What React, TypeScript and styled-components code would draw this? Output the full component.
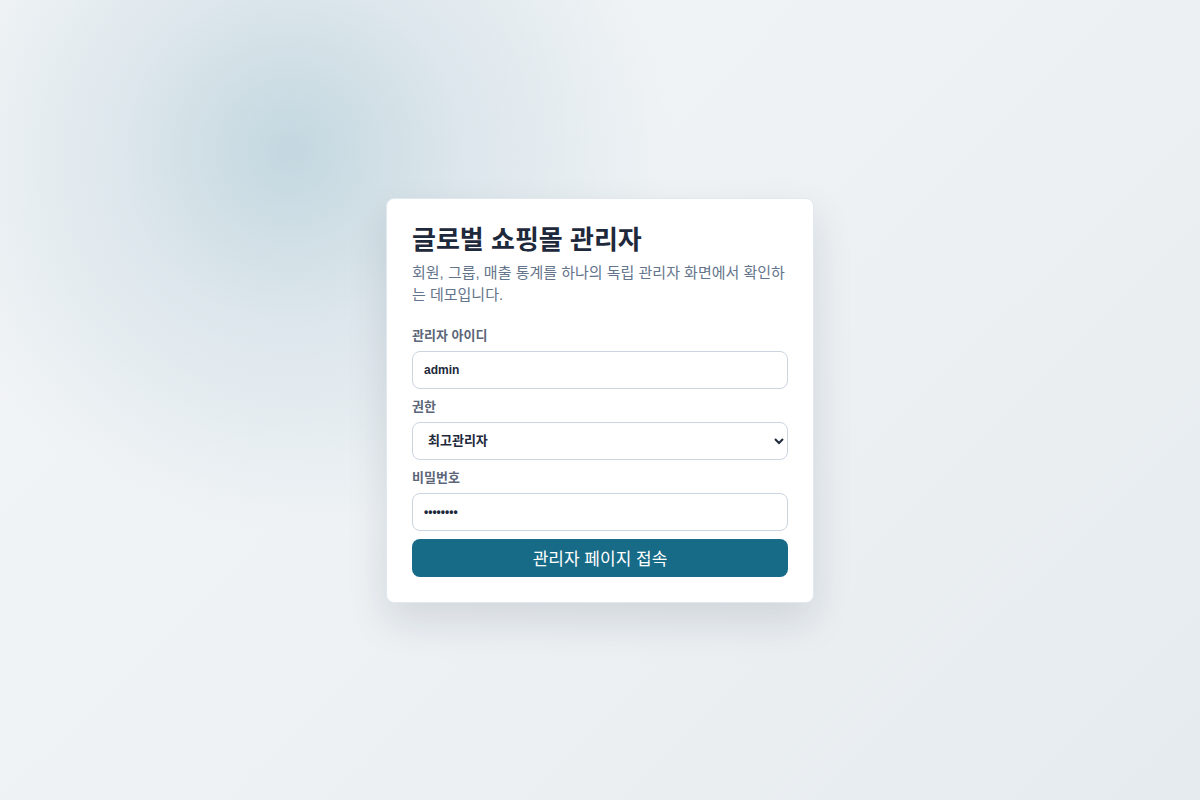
import React, { useState } from "react";
import styled, { createGlobalStyle } from "styled-components";

const COLORS = {
  INK: "#1e293b",
  MUTED: "#64748b",
  LABEL: "#5b6678",
  LINE: "#cbd5e1",
  BRAND: "#176b87",
  WHITE: "#ffffff",
};

const FONT = `"Liberation Sans", "Noto Sans CJK KR", sans-serif`;

const GlobalStyle = createGlobalStyle`
  html, body, #root {
    margin: 0;
    padding: 0;
    height: 100%;
  }
  body {
    font-family: ${FONT};
    color: ${COLORS.INK};
  }
  * {
    box-sizing: border-box;
  }
`;

const Page = styled.main`
  display: flex;
  align-items: center;
  justify-content: center;
  min-height: 100vh;
  background:
    radial-gradient(circle at 290px 150px, rgba(184, 208, 218, 0.8) 0, rgba(200, 217, 225, 0.5) 170px, rgba(220, 230, 235, 0) 380px),
    linear-gradient(135deg, #f4f6f8 0%, #eef2f5 45%, #e6ebef 100%);
`;

const Card = styled.section`
  width: 428px;
  padding: 25px;
  background: ${COLORS.WHITE};
  border: 1px solid #e2e8f0;
  border-radius: 8px;
  box-shadow: 0 18px 40px rgba(15, 23, 42, 0.12);
`;

const Title = styled.h1`
  margin: 0;
  font-size: 26px;
  line-height: 33px;
  font-weight: 700;
  color: ${COLORS.INK};
`;

const Subtitle = styled.p`
  margin: 5px 0 0;
  font-size: 15px;
  line-height: 22px;
  color: ${COLORS.MUTED};
  word-break: break-all;
`;

const Form = styled.form`
  display: flex;
  flex-direction: column;
  gap: 10px;
  margin-top: 22px;
`;

const Field = styled.label`
  display: flex;
  flex-direction: column;
  gap: 7px;
`;

const FieldLabel = styled.span`
  font-size: 13px;
  line-height: 16px;
  font-weight: 600;
  color: ${COLORS.LABEL};
`;

const controlStyle = `
  width: 100%;
  height: 38px;
  padding: 0 11px;
  border: 1px solid ${COLORS.LINE};
  border-radius: 8px;
  background: ${COLORS.WHITE};
  font-family: ${FONT};
  font-size: 12px;
  font-weight: 700;
  color: ${COLORS.INK};
  outline: none;
`;

const Input = styled.input`
  ${controlStyle}
`;

const Select = styled.select`
  ${controlStyle}
  padding: 0 6px 0 11px;
  font-size: 13px;
`;

const Submit = styled.button`
  height: 38px;
  margin-top: -2px;
  padding-bottom: 2px;
  border: none;
  border-radius: 8px;
  background: ${COLORS.BRAND};
  color: ${COLORS.WHITE};
  font-family: ${FONT};
  font-size: 17px;
  font-weight: 400;
  cursor: pointer;
`;

const App: React.FC = () => {
  const [id, setId] = useState("admin");
  const [role, setRole] = useState("super");
  const [password, setPassword] = useState("password");

  return (
    <>
      <GlobalStyle />
      <Page>
        <Card>
          <Title>글로벌 쇼핑몰 관리자</Title>
          <Subtitle>
            회원, 그룹, 매출 통계를 하나의 독립 관리자 화면에서 확인하는 데모입니다.
          </Subtitle>
          <Form onSubmit={(e) => e.preventDefault()}>
            <Field>
              <FieldLabel>관리자 아이디</FieldLabel>
              <Input value={id} onChange={(e) => setId(e.target.value)} />
            </Field>
            <Field>
              <FieldLabel>권한</FieldLabel>
              <Select value={role} onChange={(e) => setRole(e.target.value)}>
                <option value="super">최고관리자</option>
                <option value="manager">운영관리자</option>
                <option value="viewer">조회 전용</option>
              </Select>
            </Field>
            <Field>
              <FieldLabel>비밀번호</FieldLabel>
              <Input
                type="password"
                value={password}
                onChange={(e) => setPassword(e.target.value)}
              />
            </Field>
            <Submit type="submit">관리자 페이지 접속</Submit>
          </Form>
        </Card>
      </Page>
    </>
  );
};

export default App;
